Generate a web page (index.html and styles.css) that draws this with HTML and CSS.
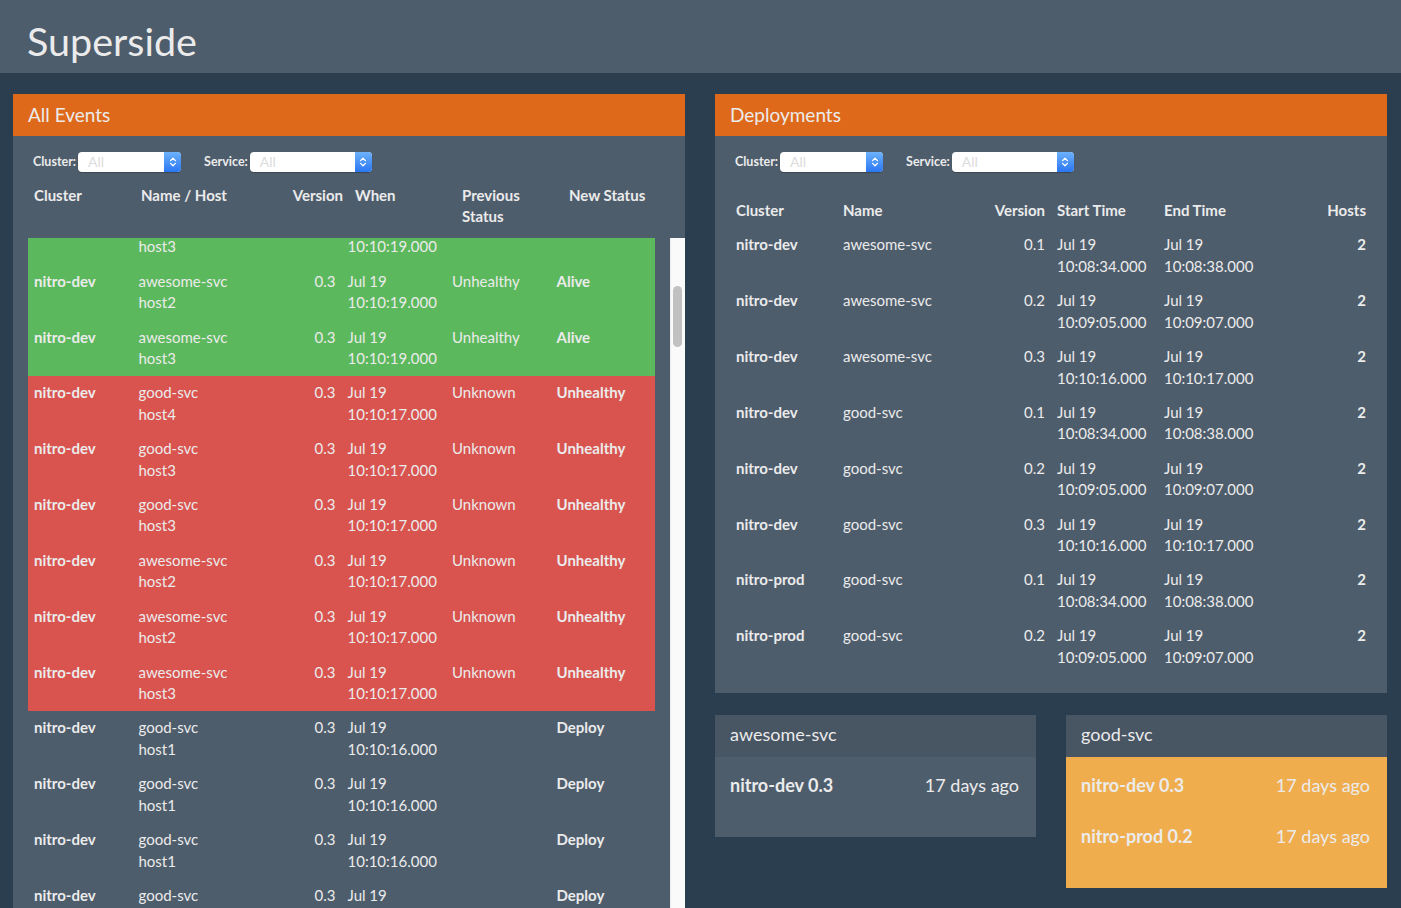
FILE: index.html
```html
<!DOCTYPE html>
<html lang="en">
<head>
<meta charset="utf-8">
<title>Superside</title>
<link rel="stylesheet" href="styles.css">
</head>
<body>
<header class="topbar">
  <h1 class="brand">Superside</h1>
</header>
<main class="layout">
  <section class="panel panel-events">
    <div class="panel-heading">All Events</div>
    <div class="panel-body panel-body-events">
      <div class="filters filters-events">
        <label class="filter">
          <span class="filter-label">Cluster:</span>
          <span class="select select-cluster"><span class="select-value">All</span><span class="select-arrows"><svg width="8" height="12" viewBox="0 0 8 12"><path d="M1.6 4.6 L4 2.2 L6.4 4.6 M1.6 7.4 L4 9.8 L6.4 7.4" fill="none" stroke="#fff" stroke-width="1.3" stroke-linecap="round" stroke-linejoin="round"/></svg></span></span>
        </label>
        <label class="filter">
          <span class="filter-label">Service:</span>
          <span class="select select-service"><span class="select-value">All</span><span class="select-arrows"><svg width="8" height="12" viewBox="0 0 8 12"><path d="M1.6 4.6 L4 2.2 L6.4 4.6 M1.6 7.4 L4 9.8 L6.4 7.4" fill="none" stroke="#fff" stroke-width="1.3" stroke-linecap="round" stroke-linejoin="round"/></svg></span></span>
        </label>
      </div>
      <table class="grid-table events-head">
        <thead>
          <tr>
            <th>Cluster</th>
            <th>Name / Host</th>
            <th class="num">Version</th>
            <th>When</th>
            <th>Previous Status</th>
            <th>New Status</th>
          </tr>
        </thead>
      </table>
      <div class="events-scroll-wrap">
        <div class="events-scroll" id="events-scroll">
          <table class="grid-table events-table">
            <tbody>
              <tr class="row-success">
                <th>nitro-dev</th>
                <td>awesome-svc<br>host3</td>
                <td class="num">0.3</td>
                <td>Jul 19<br>10:10:19.000</td>
                <td>Unhealthy</td>
                <th>Alive</th>
              </tr>
              <tr class="row-success">
                <th>nitro-dev</th>
                <td>awesome-svc<br>host2</td>
                <td class="num">0.3</td>
                <td>Jul 19<br>10:10:19.000</td>
                <td>Unhealthy</td>
                <th>Alive</th>
              </tr>
              <tr class="row-success">
                <th>nitro-dev</th>
                <td>awesome-svc<br>host3</td>
                <td class="num">0.3</td>
                <td>Jul 19<br>10:10:19.000</td>
                <td>Unhealthy</td>
                <th>Alive</th>
              </tr>
              <tr class="row-danger">
                <th>nitro-dev</th>
                <td>good-svc<br>host4</td>
                <td class="num">0.3</td>
                <td>Jul 19<br>10:10:17.000</td>
                <td>Unknown</td>
                <th>Unhealthy</th>
              </tr>
              <tr class="row-danger">
                <th>nitro-dev</th>
                <td>good-svc<br>host3</td>
                <td class="num">0.3</td>
                <td>Jul 19<br>10:10:17.000</td>
                <td>Unknown</td>
                <th>Unhealthy</th>
              </tr>
              <tr class="row-danger">
                <th>nitro-dev</th>
                <td>good-svc<br>host3</td>
                <td class="num">0.3</td>
                <td>Jul 19<br>10:10:17.000</td>
                <td>Unknown</td>
                <th>Unhealthy</th>
              </tr>
              <tr class="row-danger">
                <th>nitro-dev</th>
                <td>awesome-svc<br>host2</td>
                <td class="num">0.3</td>
                <td>Jul 19<br>10:10:17.000</td>
                <td>Unknown</td>
                <th>Unhealthy</th>
              </tr>
              <tr class="row-danger">
                <th>nitro-dev</th>
                <td>awesome-svc<br>host2</td>
                <td class="num">0.3</td>
                <td>Jul 19<br>10:10:17.000</td>
                <td>Unknown</td>
                <th>Unhealthy</th>
              </tr>
              <tr class="row-danger">
                <th>nitro-dev</th>
                <td>awesome-svc<br>host3</td>
                <td class="num">0.3</td>
                <td>Jul 19<br>10:10:17.000</td>
                <td>Unknown</td>
                <th>Unhealthy</th>
              </tr>
              <tr>
                <th>nitro-dev</th>
                <td>good-svc<br>host1</td>
                <td class="num">0.3</td>
                <td>Jul 19<br>10:10:16.000</td>
                <td></td>
                <th>Deploy</th>
              </tr>
              <tr>
                <th>nitro-dev</th>
                <td>good-svc<br>host1</td>
                <td class="num">0.3</td>
                <td>Jul 19<br>10:10:16.000</td>
                <td></td>
                <th>Deploy</th>
              </tr>
              <tr>
                <th>nitro-dev</th>
                <td>good-svc<br>host1</td>
                <td class="num">0.3</td>
                <td>Jul 19<br>10:10:16.000</td>
                <td></td>
                <th>Deploy</th>
              </tr>
              <tr>
                <th>nitro-dev</th>
                <td>good-svc<br>host2</td>
                <td class="num">0.3</td>
                <td>Jul 19<br>10:10:16.000</td>
                <td></td>
                <th>Deploy</th>
              </tr>
              <tr>
                <th>nitro-dev</th>
                <td>good-svc<br>host2</td>
                <td class="num">0.3</td>
                <td>Jul 19<br>10:10:16.000</td>
                <td></td>
                <th>Deploy</th>
              </tr>
            </tbody>
          </table>
        </div>
        <div class="scrollbar" aria-hidden="true"><div class="scrollbar-thumb"></div></div>
      </div>
    </div>
  </section>

  <div class="right-col">
    <section class="panel">
      <div class="panel-heading">Deployments</div>
      <div class="panel-body panel-body-deploys">
        <div class="filters filters-deploys">
          <label class="filter">
            <span class="filter-label">Cluster:</span>
            <span class="select select-cluster"><span class="select-value">All</span><span class="select-arrows"><svg width="8" height="12" viewBox="0 0 8 12"><path d="M1.6 4.6 L4 2.2 L6.4 4.6 M1.6 7.4 L4 9.8 L6.4 7.4" fill="none" stroke="#fff" stroke-width="1.3" stroke-linecap="round" stroke-linejoin="round"/></svg></span></span>
          </label>
          <label class="filter">
            <span class="filter-label">Service:</span>
            <span class="select select-service"><span class="select-value">All</span><span class="select-arrows"><svg width="8" height="12" viewBox="0 0 8 12"><path d="M1.6 4.6 L4 2.2 L6.4 4.6 M1.6 7.4 L4 9.8 L6.4 7.4" fill="none" stroke="#fff" stroke-width="1.3" stroke-linecap="round" stroke-linejoin="round"/></svg></span></span>
          </label>
        </div>
        <table class="grid-table deploys-table">
          <thead>
            <tr>
              <th>Cluster</th>
              <th>Name</th>
              <th class="num">Version</th>
              <th>Start Time</th>
              <th>End Time</th>
              <th class="num">Hosts</th>
            </tr>
          </thead>
          <tbody>
            <tr>
              <th>nitro-dev</th>
              <td>awesome-svc</td>
              <td class="num">0.1</td>
              <td>Jul 19<br>10:08:34.000</td>
              <td>Jul 19<br>10:08:38.000</td>
              <th class="num">2</th>
            </tr>
            <tr>
              <th>nitro-dev</th>
              <td>awesome-svc</td>
              <td class="num">0.2</td>
              <td>Jul 19<br>10:09:05.000</td>
              <td>Jul 19<br>10:09:07.000</td>
              <th class="num">2</th>
            </tr>
            <tr>
              <th>nitro-dev</th>
              <td>awesome-svc</td>
              <td class="num">0.3</td>
              <td>Jul 19<br>10:10:16.000</td>
              <td>Jul 19<br>10:10:17.000</td>
              <th class="num">2</th>
            </tr>
            <tr>
              <th>nitro-dev</th>
              <td>good-svc</td>
              <td class="num">0.1</td>
              <td>Jul 19<br>10:08:34.000</td>
              <td>Jul 19<br>10:08:38.000</td>
              <th class="num">2</th>
            </tr>
            <tr>
              <th>nitro-dev</th>
              <td>good-svc</td>
              <td class="num">0.2</td>
              <td>Jul 19<br>10:09:05.000</td>
              <td>Jul 19<br>10:09:07.000</td>
              <th class="num">2</th>
            </tr>
            <tr>
              <th>nitro-dev</th>
              <td>good-svc</td>
              <td class="num">0.3</td>
              <td>Jul 19<br>10:10:16.000</td>
              <td>Jul 19<br>10:10:17.000</td>
              <th class="num">2</th>
            </tr>
            <tr>
              <th>nitro-prod</th>
              <td>good-svc</td>
              <td class="num">0.1</td>
              <td>Jul 19<br>10:08:34.000</td>
              <td>Jul 19<br>10:08:38.000</td>
              <th class="num">2</th>
            </tr>
            <tr>
              <th>nitro-prod</th>
              <td>good-svc</td>
              <td class="num">0.2</td>
              <td>Jul 19<br>10:09:05.000</td>
              <td>Jul 19<br>10:09:07.000</td>
              <th class="num">2</th>
            </tr>
          </tbody>
        </table>
      </div>
    </section>

    <div class="cards">
      <section class="card">
        <div class="card-heading">awesome-svc</div>
        <ul class="card-list">
          <li class="card-item"><span class="card-item-name">nitro-dev 0.3</span><span class="card-item-time">17 days ago</span></li>
        </ul>
      </section>
      <section class="card">
        <div class="card-heading">good-svc</div>
        <ul class="card-list card-list-warning">
          <li class="card-item"><span class="card-item-name">nitro-dev 0.3</span><span class="card-item-time">17 days ago</span></li>
          <li class="card-item"><span class="card-item-name">nitro-prod 0.2</span><span class="card-item-time">17 days ago</span></li>
        </ul>
      </section>
    </div>
  </div>
</main>
<script src="script.js"></script>
</body>
</html>
```

FILE: styles.css
```css
* { box-sizing: border-box; }

html, body {
  margin: 0;
  height: 100%;
  overflow: hidden;
}

body {
  background: #2b3e50;
  color: #ebebeb;
  font-family: "Lato", "Liberation Sans", sans-serif;
  font-size: 15px;
  line-height: 1.42857;
}

.topbar {
  background: #4e5d6c;
  height: 73px;
  padding: 19px 27px 0;
}

.brand {
  margin: 0;
  font-size: 39.5px;
  font-weight: 400;
  line-height: 43px;
}

.layout {
  display: grid;
  grid-template-columns: 672px 672px;
  column-gap: 30px;
  padding: 21px 14px 0 13px;
  align-items: start;
}

.panel {
  background: #4e5d6c;
}

.panel-heading {
  background: #df691a;
  height: 42px;
  padding: 10px 15px 0;
  font-size: 19px;
  line-height: 22px;
}

.panel-body {
  padding: 15px 15px 20px;
}

.panel-body-deploys {
  padding-bottom: 18px;
}

.panel-body-events {
  padding: 15px 0 0 15px;
}

/* filters */
.filters {
  display: flex;
  align-items: center;
  height: 22px;
  padding-left: 5px;
}

.filters-events { margin-bottom: 6px; }
.filters-deploys { margin-bottom: 21px; }

.filter {
  display: flex;
  align-items: center;
  margin-right: 23px;
}

.filter-label {
  font-size: 12.5px;
  font-weight: 700;
  margin-right: 2px;
}

.select {
  display: flex;
  height: 20px;
  background: #fff;
  border-radius: 4px;
  box-shadow: 0 1px 1px rgba(0, 0, 0, 0.25);
}

.select-cluster { width: 103px; }
.select-service { width: 122px; }

.select-value {
  flex: 1;
  padding-left: 10px;
  color: #dcdcdc;
  font-size: 14px;
  line-height: 20px;
}

.select-arrows {
  width: 17px;
  display: flex;
  align-items: center;
  justify-content: center;
  border-radius: 0 4px 4px 0;
  background: linear-gradient(#6db2fb, #2a76f2);
}

/* tables */
.grid-table {
  border-collapse: separate;
  border-spacing: 0;
  table-layout: fixed;
}

.grid-table th,
.grid-table td {
  padding: 6px 6px 7px;
  vertical-align: top;
  text-align: left;
  line-height: 1.42857;
}

.grid-table th { font-weight: 700; }
.grid-table td { font-weight: 400; }

.grid-table .num { text-align: right; }

.events-head {
  width: 642px;
  margin-bottom: 3px;
}

.deploys-table {
  width: 642px;
}

.events-scroll-wrap {
  display: flex;
  height: 670px;
}

.events-scroll {
  flex: 1;
  overflow: hidden;
}

.scrollbar {
  width: 15px;
  flex: none;
  background: #fafafa;
  border-left: 1px solid #ececec;
  padding-top: 48px;
}

.scrollbar-thumb {
  width: 9px;
  height: 61px;
  margin-left: 2px;
  border-radius: 5px;
  background: #c1c1c1;
}

.events-table {
  width: 627px;
}

.row-success { background: #5cb85c; }
.row-danger { background: #d9534f; }

/* right column */
.right-col {
  display: flex;
  flex-direction: column;
  gap: 22px;
}

.cards {
  display: grid;
  grid-template-columns: 1fr 1fr;
  column-gap: 30px;
  align-items: start;
}

.card {
  background: #4e5d6c;
}

.card-heading {
  background: #485563;
  height: 42px;
  padding: 7px 15px 0;
  font-size: 18px;
  line-height: 25px;
}

.card-list {
  list-style: none;
  margin: 0;
  padding: 3px 0 26px;
}

.card-list-warning {
  background: #f0ad4e;
}

.card-item {
  display: flex;
  justify-content: space-between;
  padding: 13px 17px 13px 15px;
  font-size: 18px;
  line-height: 25px;
}

.card-item-name { font-weight: 700; }
.card-item-time { font-weight: 400; }
```

FILE: script.js
```js
document.getElementById('events-scroll').scrollTop = 29;
```
